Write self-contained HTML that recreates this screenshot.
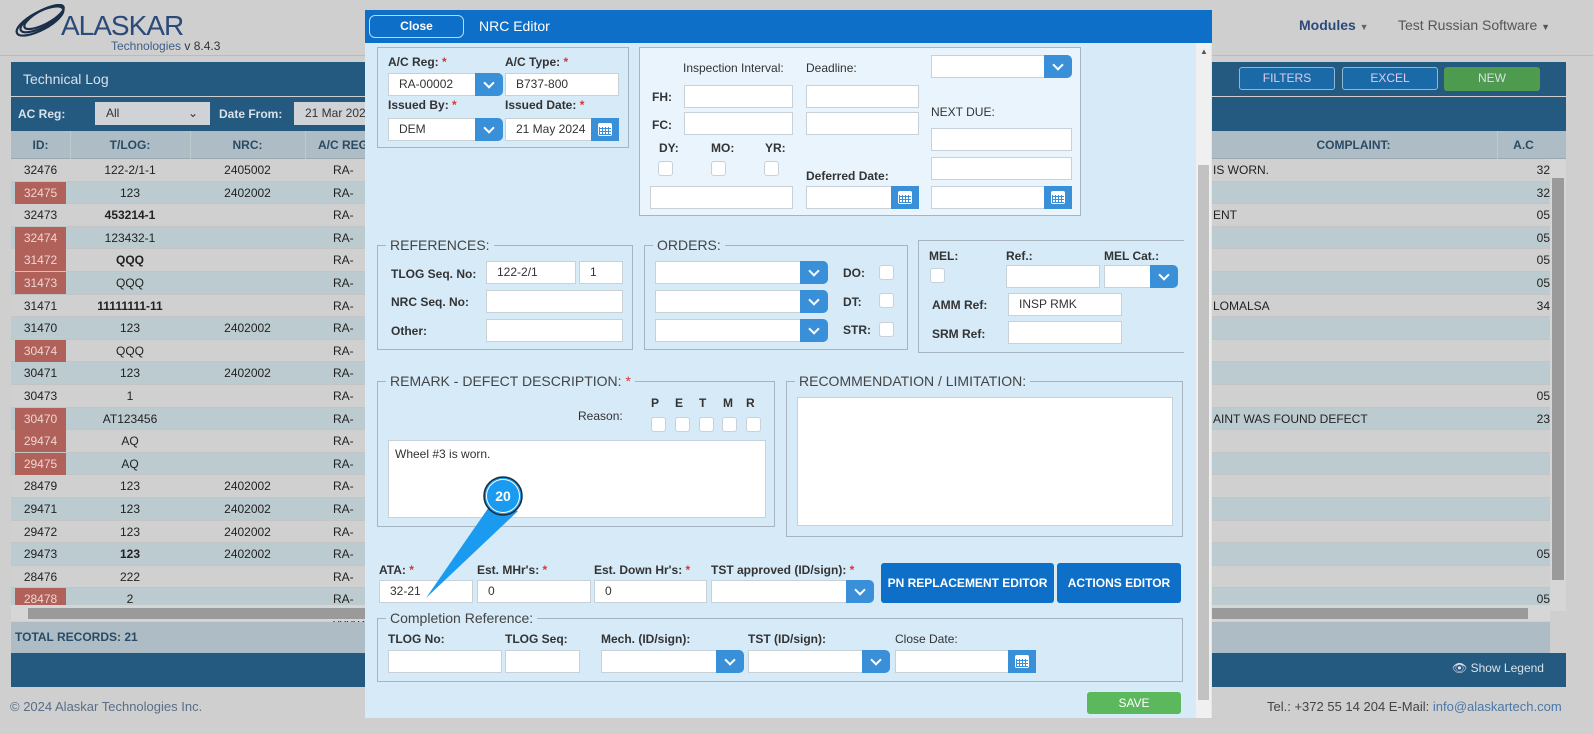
<!DOCTYPE html>
<html><head><meta charset="utf-8"><style>
*{box-sizing:border-box;margin:0;padding:0}
body{width:1593px;height:734px;overflow:hidden;background:#cfcfcf;font-family:"Liberation Sans",Arial,sans-serif;font-size:12px;color:#222;position:relative}
.a{position:absolute}
.row{position:absolute;left:11px;width:1539px;height:22.6px;border-bottom:1px solid #c4c4c4}
.c{position:absolute;top:0;height:22px;line-height:22px;text-align:center;font-size:12px;color:#222}
.red{background:#b0615a;color:#efd5d2}
.lb{position:absolute;font-weight:bold;font-size:12px;color:#333;white-space:nowrap}
.lt{position:absolute;font-size:12px;color:#333;white-space:nowrap}
.st{color:#d33}
.in{position:absolute;background:#fff;border:1px solid #c8d0d8;height:23px;line-height:21px;padding-left:10px;font-size:12px;color:#333}
.bt{position:absolute;background:#3a8fd9;border-radius:0 5px 5px 0;height:23px;width:28px}
.bt:after{content:"";position:absolute;left:10px;top:6px;width:6px;height:6px;border-right:2px solid #fff;border-bottom:2px solid #fff;transform:rotate(45deg)}
.cal{position:absolute;background:#3a8fd9;height:23px;width:28px}
.cal i{position:absolute;left:7px;top:5px;width:14px;height:13px;border-radius:2px;background:#fff}
.cal i:before{content:"";position:absolute;left:1px;top:4px;width:12px;height:8px;background:repeating-linear-gradient(90deg,#3a8fd9 0 1px,transparent 1px 3px),repeating-linear-gradient(0deg,#3a8fd9 0 1px,transparent 1px 3px)}
.cb{position:absolute;width:15px;height:15px;background:#fff;border:1px solid #c8d0d8;border-radius:3px}
.fs{position:absolute;border:1px solid #a8b4c0}
.lg{position:absolute;background:#d6eaf8;padding:0 4px;font-size:14px;color:#444;white-space:nowrap;top:-9px;left:8px;line-height:16px}
</style></head><body>

<div class="a" style="left:0;top:0;width:1593px;height:56px;border-bottom:1px solid #bbb;background:#cfcfcf"></div>
<svg class="a" style="left:10px;top:4px" width="60" height="34" viewBox="0 0 60 34">
<g fill="none" stroke="#1c2f4a" stroke-width="2.2">
<ellipse cx="30" cy="17" rx="26" ry="9" transform="rotate(-28 30 17)"/>
<ellipse cx="32" cy="15" rx="24" ry="8" transform="rotate(-28 32 15)"/>
<ellipse cx="34" cy="13" rx="22" ry="7" transform="rotate(-28 34 13)"/>
</g></svg>
<div class="a" style="left:61px;top:10px;font-size:28px;color:#2b4a7a;letter-spacing:-1px">ALASKAR</div>
<div class="a" style="left:111px;top:39px;font-size:12px;color:#3f5f88">Technologies <span style="color:#333">v 8.4.3</span></div>
<div class="a" style="left:1299px;top:17px;font-size:14px;font-weight:bold;color:#2b4a7a">Modules <span style="font-size:9px;color:#666">▼</span></div>
<div class="a" style="left:1398px;top:17px;font-size:14px;color:#555">Test Russian Software <span style="font-size:9px">▼</span></div>

<div class="a" style="left:11px;top:62px;width:1555px;height:34px;background:#255a80"></div>
<div class="a" style="left:23px;top:71px;font-size:14px;color:#d8e2ea">Technical Log</div>
<div class="a" style="left:1239px;top:67px;width:96px;height:23px;border:1px solid #8fb8d8;border-radius:3px;background:#1b6aa8;color:#dce;text-align:center;line-height:21px">FILTERS</div>
<div class="a" style="left:1342px;top:67px;width:96px;height:23px;border:1px solid #8fb8d8;border-radius:3px;background:#1b6aa8;color:#dce;text-align:center;line-height:21px">EXCEL</div>
<div class="a" style="left:1444px;top:67px;width:96px;height:24px;border-radius:3px;background:#4e9a4e;color:#dde;text-align:center;line-height:22px">NEW</div>
<div class="a" style="left:11px;top:97px;width:1555px;height:34px;background:#255a80"></div>
<div class="a" style="left:18px;top:107px;font-weight:bold;color:#d8e2ea">AC Reg:</div>
<div class="a" style="left:95px;top:102px;width:115px;height:23px;background:#cfd2d6;padding-left:11px;line-height:23px;color:#333">All<span style="position:absolute;right:12px">⌄</span></div>
<div class="a" style="left:219px;top:107px;font-weight:bold;color:#d8e2ea">Date From:</div>
<div class="a" style="left:294px;top:102px;width:80px;height:23px;background:#cfd2d6;padding-left:11px;line-height:23px;color:#333">21 Mar 2024</div>
<div class="a" style="left:11px;top:131px;width:1555px;height:28px;background:#aebdc5;border-bottom:1px solid #9aa8b0"></div>
<div class="c a" style="left:11px;top:134px;width:59px;font-weight:bold;color:#2a4a66">ID:</div>
<div class="c a" style="left:70px;top:134px;width:120px;font-weight:bold;color:#2a4a66">T/LOG:</div>
<div class="c a" style="left:190px;top:134px;width:115px;font-weight:bold;color:#2a4a66">NRC:</div>
<div class="c a" style="left:305px;top:134px;width:80px;font-weight:bold;color:#2a4a66">A/C REG:</div>
<div class="c a" style="left:1210px;top:134px;width:287px;font-weight:bold;color:#2a4a66">COMPLAINT:</div>
<div class="c a" style="left:1497px;top:134px;width:53px;font-weight:bold;color:#2a4a66">A.C</div>
<div class="a" style="left:70px;top:131px;width:1px;height:480px;background:#bcc"></div>
<div class="a" style="left:190px;top:131px;width:1px;height:480px;background:#bcc"></div>
<div class="a" style="left:305px;top:131px;width:1px;height:480px;background:#bcc"></div>
<div class="a" style="left:1497px;top:131px;width:1px;height:480px;background:#bcc"></div>

<div id="rows"></div>
<script>
var d=[["32476",0,"122-2/1-1",0,"2405002","IS WORN.","32"],["32475",1,"123",0,"2402002","","32"],["32473",0,"453214-1",1,"","ENT","05"],["32474",1,"123432-1",0,"","","05"],["31472",1,"QQQ",1,"","","05"],["31473",1,"QQQ",0,"","","05"],["31471",0,"11111111-11",1,"","LOMALSA","34"],["31470",0,"123",0,"2402002","",""],["30474",1,"QQQ",0,"","",""],["30471",0,"123",0,"2402002","",""],["30473",0,"1",0,"","","05"],["30470",1,"AT123456",0,"","AINT WAS FOUND DEFECT","23"],["29474",1,"AQ",0,"","",""],["29475",1,"AQ",0,"","",""],["28479",0,"123",0,"2402002","",""],["29471",0,"123",0,"2402002","",""],["29472",0,"123",0,"2402002","",""],["29473",0,"123",1,"2402002","","05"],["28476",0,"222",0,"","",""],["28478",1,"2",0,"","","05"]];
var h="";for(var i=0;i<d.length;i++){var r=d[i],y=159+i*22.6;var bg=i%2?"#bccbcf":"#d0d0d0";
h+='<div class="row" style="top:'+y+'px;background:'+bg+'">'+
'<div class="c'+(r[1]?' red':'')+'" style="left:4px;width:51px">'+r[0]+'</div>'+
'<div class="c" style="left:59px;width:120px;'+(r[3]?'font-weight:bold':'')+'">'+r[2]+'</div>'+
'<div class="c" style="left:179px;width:115px">'+r[4]+'</div>'+
'<div class="c" style="left:294px;width:80px;text-align:left;padding-left:28px">RA-00002</div>'+
'<div class="c" style="left:1202px;text-align:left">'+r[5]+'</div>'+
'<div class="c" style="left:1486px;width:53px;text-align:right">'+r[6]+'</div></div>';}
document.getElementById("rows").innerHTML=h;
</script>
<div class="a" style="left:1550px;top:159px;width:16px;height:452px;background:#d6d6d6"></div>
<div class="a" style="left:1552px;top:178px;width:12px;height:402px;background:#9a9a9a"></div>
<div class="a" style="left:11px;top:605px;width:1539px;height:16px;background:#d6d6d6"></div>
<div class="a" style="left:28px;top:608px;width:1500px;height:11px;background:#9a9a9a"></div>
<div class="a" style="left:11px;top:622px;width:1539px;height:31px;background:#aebdc5"></div>
<div class="a" style="left:15px;top:630px;font-weight:bold;color:#2a4a66">TOTAL RECORDS: 21</div>
<div class="a" style="left:11px;top:653px;width:1555px;height:34px;background:#255a80"></div>
<div class="a" style="left:1452px;top:661px;color:#d8e2ea;font-size:12px">👁 Show Legend</div>
<div class="a" style="left:10px;top:699px;font-size:13px;color:#5a6e88">© 2024 Alaskar Technologies Inc.</div>
<div class="a" style="left:1267px;top:699px;font-size:13px;color:#444">Tel.: +372 55 14 204 E-Mail: <span style="color:#4a78a8">info@alaskartech.com</span></div>

<div class="a" style="left:365px;top:10px;width:847px;height:708px;background:#d6eaf8"></div>
<div class="a" style="left:365px;top:10px;width:847px;height:33px;background:#0d6fc7"></div>
<div class="a" style="left:369px;top:15px;width:95px;height:23px;border:1px solid #b8d8f4;border-radius:6px;color:#fff;text-align:center;line-height:21px;font-weight:bold">Close</div>
<div class="a" style="left:479px;top:18px;color:#fff;font-size:14px">NRC Editor</div>
<div class="a" style="left:1196px;top:43px;width:15px;height:675px;background:#f0f0f0"></div>
<div class="a" style="left:1198px;top:165px;width:11px;height:535px;background:#c2c2c2"></div>
<div class="a" style="left:1200px;top:47px;font-size:8px;color:#555">▲</div>

<div class="fs" style="left:377px;top:47px;width:252px;height:101px;background:#d6eaf8"></div>
<div class="lb" style="left:388px;top:55px">A/C Reg: <span class="st">*</span></div>
<div class="lb" style="left:505px;top:55px">A/C Type: <span class="st">*</span></div>
<div class="in" style="left:388px;top:73px;width:88px">RA-00002</div><div class="bt" style="left:475px;top:73px"></div>
<div class="in" style="left:505px;top:73px;width:114px">B737-800</div>
<div class="lb" style="left:388px;top:98px">Issued By: <span class="st">*</span></div>
<div class="lb" style="left:505px;top:98px">Issued Date: <span class="st">*</span></div>
<div class="in" style="left:388px;top:118px;width:88px">DEM</div><div class="bt" style="left:475px;top:118px"></div>
<div class="in" style="left:505px;top:118px;width:87px">21 May 2024</div><div class="cal" style="left:591px;top:118px"><i></i></div>

<div class="fs" style="left:639px;top:47px;width:442px;height:169px;background:#e9f4fc"></div>
<div class="lt" style="left:683px;top:61px">Inspection Interval:</div>
<div class="lt" style="left:806px;top:61px">Deadline:</div>
<div class="in" style="left:931px;top:55px;width:114px"></div><div class="bt" style="left:1044px;top:55px"></div>
<div class="lb" style="left:652px;top:90px">FH:</div>
<div class="in" style="left:684px;top:85px;width:109px"></div><div class="in" style="left:806px;top:85px;width:113px"></div>
<div class="lt" style="left:931px;top:105px">NEXT DUE:</div>
<div class="lb" style="left:652px;top:118px">FC:</div>
<div class="in" style="left:684px;top:112px;width:109px"></div><div class="in" style="left:806px;top:112px;width:113px"></div>
<div class="in" style="left:931px;top:128px;width:141px"></div>
<div class="lb" style="left:659px;top:141px">DY:</div><div class="lb" style="left:711px;top:141px">MO:</div><div class="lb" style="left:765px;top:141px">YR:</div>
<div class="cb" style="left:658px;top:161px"></div><div class="cb" style="left:711px;top:161px"></div><div class="cb" style="left:764px;top:161px"></div>
<div class="in" style="left:931px;top:157px;width:141px"></div>
<div class="lb" style="left:806px;top:169px">Deferred Date:</div>
<div class="in" style="left:650px;top:186px;width:143px"></div>
<div class="in" style="left:806px;top:186px;width:86px"></div><div class="cal" style="left:891px;top:186px"><i></i></div>
<div class="in" style="left:931px;top:186px;width:114px"></div><div class="cal" style="left:1044px;top:186px"><i></i></div>

<div class="fs" style="left:377px;top:245px;width:256px;height:105px"><div class="lg">REFERENCES:</div></div>
<div class="lb" style="left:391px;top:267px">TLOG Seq. No:</div>
<div class="in" style="left:486px;top:261px;width:90px">122-2/1</div><div class="in" style="left:579px;top:261px;width:44px">1</div>
<div class="lb" style="left:391px;top:295px">NRC Seq. No:</div><div class="in" style="left:486px;top:290px;width:137px"></div>
<div class="lb" style="left:391px;top:324px">Other:</div><div class="in" style="left:486px;top:319px;width:137px"></div>
<div class="fs" style="left:644px;top:245px;width:264px;height:105px"><div class="lg">ORDERS:</div></div>
<div class="in" style="left:655px;top:261px;width:146px"></div><div class="bt" style="left:800px;top:261px"></div>
<div class="in" style="left:655px;top:290px;width:146px"></div><div class="bt" style="left:800px;top:290px"></div>
<div class="in" style="left:655px;top:319px;width:146px"></div><div class="bt" style="left:800px;top:319px"></div>
<div class="lb" style="left:843px;top:266px">DO:</div><div class="cb" style="left:879px;top:265px"></div>
<div class="lb" style="left:843px;top:295px">DT:</div><div class="cb" style="left:879px;top:293px"></div>
<div class="lb" style="left:843px;top:323px">STR:</div><div class="cb" style="left:879px;top:322px"></div>
<div class="fs" style="left:918px;top:240px;width:266px;height:113px;border-right:none"></div>
<div class="lb" style="left:929px;top:249px">MEL:</div><div class="lb" style="left:1006px;top:249px">Ref.:</div><div class="lb" style="left:1104px;top:249px">MEL Cat.:</div>
<div class="cb" style="left:930px;top:268px"></div>
<div class="in" style="left:1006px;top:265px;width:94px"></div>
<div class="in" style="left:1104px;top:265px;width:47px"></div><div class="bt" style="left:1150px;top:265px"></div>
<div class="lb" style="left:932px;top:298px">AMM Ref:</div><div class="in" style="left:1008px;top:293px;width:114px">INSP RMK</div>
<div class="lb" style="left:932px;top:327px">SRM Ref:</div><div class="in" style="left:1008px;top:321px;width:114px"></div>
<div class="fs" style="left:377px;top:381px;width:398px;height:146px"><div class="lg">REMARK - DEFECT DESCRIPTION: <span class="st">*</span></div></div>
<div class="lt" style="left:578px;top:409px">Reason:</div>
<div class="lb" style="left:651px;top:396px">P</div><div class="lb" style="left:675px;top:396px">E</div><div class="lb" style="left:699px;top:396px">T</div><div class="lb" style="left:723px;top:396px">M</div><div class="lb" style="left:746px;top:396px">R</div>
<div class="cb" style="left:651px;top:417px"></div><div class="cb" style="left:675px;top:417px"></div><div class="cb" style="left:699px;top:417px"></div><div class="cb" style="left:722px;top:417px"></div><div class="cb" style="left:746px;top:417px"></div>
<div class="in" style="left:388px;top:440px;width:378px;height:78px;padding:5px 6px;line-height:16px">Wheel #3 is worn.</div>
<div class="fs" style="left:786px;top:381px;width:397px;height:156px"><div class="lg">RECOMMENDATION / LIMITATION:</div></div>
<div class="in" style="left:797px;top:397px;width:376px;height:129px"></div>
<div class="lb" style="left:379px;top:563px">ATA: <span class="st">*</span></div>
<div class="lb" style="left:477px;top:563px">Est. MHr's: <span class="st">*</span></div>
<div class="lb" style="left:594px;top:563px">Est. Down Hr's: <span class="st">*</span></div>
<div class="lb" style="left:711px;top:563px">TST approved (ID/sign): <span class="st">*</span></div>
<div class="in" style="left:379px;top:580px;width:94px">32-21</div>
<div class="in" style="left:477px;top:580px;width:114px">0</div>
<div class="in" style="left:594px;top:580px;width:113px">0</div>
<div class="in" style="left:711px;top:580px;width:136px"></div><div class="bt" style="left:846px;top:580px"></div>
<div class="a" style="left:881px;top:563px;width:173px;height:40px;background:#0d6fc7;border-radius:3px;color:#fff;font-weight:bold;text-align:center;line-height:40px">PN REPLACEMENT EDITOR</div>
<div class="a" style="left:1057px;top:563px;width:124px;height:40px;background:#0d6fc7;border-radius:3px;color:#fff;font-weight:bold;text-align:center;line-height:40px">ACTIONS EDITOR</div>
<div class="fs" style="left:377px;top:618px;width:806px;height:64px"><div class="lg">Completion Reference:</div></div>
<div class="lb" style="left:388px;top:632px">TLOG No:</div><div class="lb" style="left:505px;top:632px">TLOG Seq:</div><div class="lb" style="left:601px;top:632px">Mech. (ID/sign):</div><div class="lb" style="left:748px;top:632px">TST (ID/sign):</div><div class="lt" style="left:895px;top:632px">Close Date:</div>
<div class="in" style="left:388px;top:650px;width:114px"></div>
<div class="in" style="left:505px;top:650px;width:75px"></div>
<div class="in" style="left:601px;top:650px;width:116px"></div><div class="bt" style="left:716px;top:650px"></div>
<div class="in" style="left:748px;top:650px;width:115px"></div><div class="bt" style="left:862px;top:650px"></div>
<div class="in" style="left:895px;top:650px;width:114px"></div><div class="cal" style="left:1008px;top:650px"><i></i></div>
<div class="a" style="left:1087px;top:692px;width:94px;height:22px;background:#5cb85c;border-radius:3px;color:#fff;text-align:center;line-height:22px">SAVE</div>

<svg class="a" style="left:0;top:0" width="1593" height="734">
<polygon points="489,507 518,511 426,598" fill="#1a9bf0"/>
<circle cx="503" cy="496" r="19" fill="#1a9bf0" stroke="#1a2a3a" stroke-width="1.5"/>
<circle cx="503" cy="496" r="16.5" fill="none" stroke="#fff" stroke-width="1"/>
<text x="503" y="501" font-family="Liberation Sans" font-weight="bold" font-size="14" fill="#fff" text-anchor="middle">20</text>
</svg>
</body></html>
